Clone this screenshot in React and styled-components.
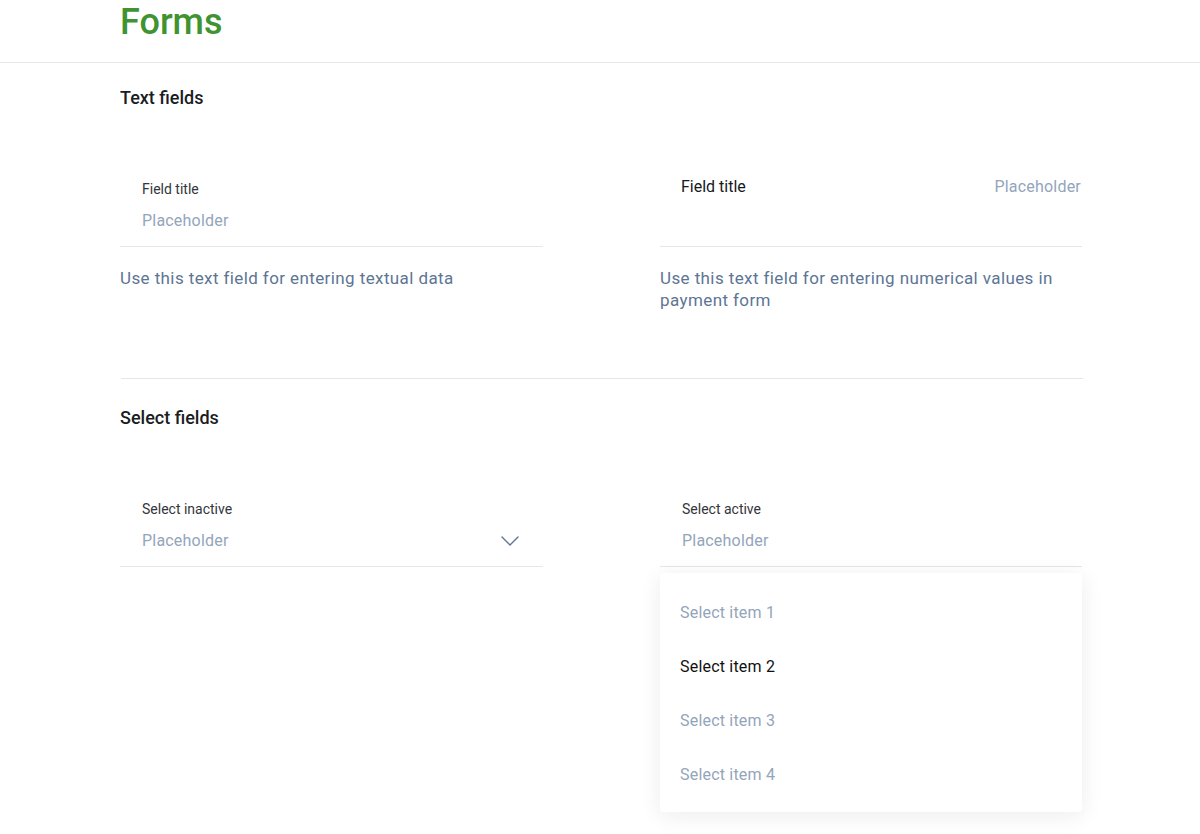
import styled, { createGlobalStyle } from "styled-components"

const GlobalStyle = createGlobalStyle`
body {
    margin: 0;
    background: #fff;
    font-family: Roboto, "Liberation Sans", sans-serif;
}
`

const ChevronDown = () => (
    <svg width="18" height="10" viewBox="0 0 18 10" fill="none">
        <path d="M1 1l8 8 8-8" stroke="#5d7594" strokeWidth="1.4" strokeLinecap="round" strokeLinejoin="round" />
    </svg>
)

const items = ["Select item 1", "Select item 2", "Select item 3", "Select item 4"]

const App = () => {
    return (
    <Page>
        <GlobalStyle />
        <Header>
            <Title>Forms</Title>
        </Header>

        <Content>
            <SectionTitle>Text fields</SectionTitle>
            <Row>
                <div>
                    <Field>
                        <Label>Field title</Label>
                        <Placeholder>Placeholder</Placeholder>
                    </Field>
                    <Helper>Use this text field for entering textual data</Helper>
                </div>
                <div>
                    <InlineField>
                        <InlineLabel>Field title</InlineLabel>
                        <Placeholder>Placeholder</Placeholder>
                    </InlineField>
                    <Helper>Use this text field for entering numerical values in payment form</Helper>
                </div>
            </Row>

            <Divider />

            <SectionTitle>Select fields</SectionTitle>
            <Row>
                <div>
                    <Field>
                        <Label>Select inactive</Label>
                        <SelectLine>
                            <Placeholder>Placeholder</Placeholder>
                            <ChevronDown />
                        </SelectLine>
                    </Field>
                </div>
                <SelectWrap>
                    <Field>
                        <Label>Select active</Label>
                        <Placeholder>Placeholder</Placeholder>
                    </Field>
                    <Menu>
                        {items.map((item, i) => (
                            <MenuItem key={item} selected={i === 1}>{item}</MenuItem>
                        ))}
                    </Menu>
                </SelectWrap>
            </Row>
        </Content>
    </Page>
    );
}

export default App


const Page = styled.div`
min-height: 834px;
`
const Header = styled.div`
height: 62px;
border-bottom: 1px solid #e6e8ea;
padding: 0 0 0 120px;
`
const Title = styled.h1`
margin: 0;
padding-top: 2px;
font-size: 36px;
line-height: 40px;
font-weight: 500;
color: #3f9331;
`
const Content = styled.div`
width: 963px;
margin-left: 120px;
padding-top: 25px;
`
const SectionTitle = styled.h2`
margin: 0;
font-size: 18px;
line-height: 20px;
font-weight: 500;
color: #1a1d22;
`
const Row = styled.div`
display: grid;
grid-template-columns: 423px 422px;
column-gap: 117px;
margin-top: 71px;
`
const Field = styled.div`
display: flex;
flex-direction: column;
gap: 11px;
padding: 0 24px 14px 22px;
border-bottom: 1px solid #e3e7ed;
`
const InlineField = styled.div`
display: flex;
justify-content: space-between;
padding: 0 1px 48px 21px;
margin-top: -3px;
border-bottom: 1px solid #e3e7ed;
`
const Label = styled.div`
font-size: 14px;
line-height: 20px;
color: #33363b;
`
const InlineLabel = styled.div`
font-size: 16px;
line-height: 22px;
color: #15181c;
`
const Placeholder = styled.div`
font-size: 16px;
line-height: 22px;
letter-spacing: 0.2px;
color: #93a5bb;
`
const SelectLine = styled.div`
display: flex;
align-items: center;
justify-content: space-between;
`
const Helper = styled.p`
margin: 20px 0 0;
font-size: 17px;
line-height: 22px;
color: #5d7594;
letter-spacing: 0.4px;
`
const Divider = styled.div`
height: 1px;
background: #e3e7ed;
margin: 67px 0 29px 1px;
`
const SelectWrap = styled.div`
position: relative;
`
const Menu = styled.div`
position: absolute;
top: calc(100% + 6px);
left: 0;
right: 0;
padding: 12px 0 11px;
background: #fff;
border-radius: 4px;
box-shadow: 0 4px 22px rgba(20, 30, 50, 0.08);
`
const MenuItem = styled.div`
height: 54px;
display: flex;
align-items: center;
padding-left: 20px;
font-size: 16px;
letter-spacing: 0.2px;
color: ${p => p.selected ? "#111" : "#93a5bb"};
`
